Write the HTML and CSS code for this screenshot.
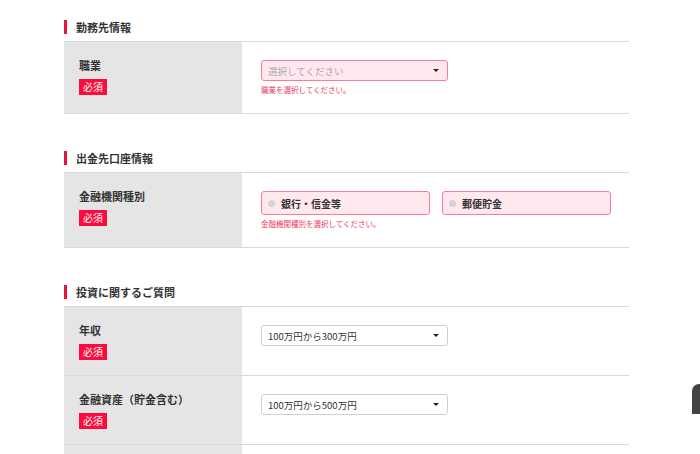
FILE: index.html
```html
<!DOCTYPE html>
<html lang="ja">
<head>
<meta charset="utf-8">
<link rel="stylesheet" href="styles.css">
</head>
<body>
<div class="page">
  <section class="section first">
    <h2 class="heading">勤務先情報</h2>
    <div class="table">
      <div class="row">
        <div class="label-cell"><div class="label">職業</div><span class="badge">必須</span></div>
        <div class="field-cell">
          <div class="select error placeholder"><span>選択してください</span><i class="arrow"></i></div>
          <div class="err-msg">職業を選択してください。</div>
        </div>
      </div>
    </div>
  </section>
  <section class="section">
    <h2 class="heading">出金先口座情報</h2>
    <div class="table">
      <div class="row">
        <div class="label-cell"><div class="label">金融機関種別</div><span class="badge">必須</span></div>
        <div class="field-cell">
          <div class="radios">
            <div class="radio"><i class="dot"></i><span>銀行・信金等</span></div>
            <div class="radio"><i class="dot"></i><span>郵便貯金</span></div>
          </div>
          <div class="err-msg">金融機関種別を選択してください。</div>
        </div>
      </div>
    </div>
  </section>
  <section class="section">
    <h2 class="heading">投資に関するご質問</h2>
    <div class="table">
      <div class="row">
        <div class="label-cell"><div class="label">年収</div><span class="badge">必須</span></div>
        <div class="field-cell">
          <div class="select"><span>100万円から300万円</span><i class="arrow"></i></div>
        </div>
      </div>
      <div class="row">
        <div class="label-cell"><div class="label">金融資産（貯金含む）</div><span class="badge">必須</span></div>
        <div class="field-cell">
          <div class="select"><span>100万円から500万円</span><i class="arrow"></i></div>
        </div>
      </div>
      <div class="row">
        <div class="label-cell"><div class="label">&nbsp;</div></div>
        <div class="field-cell"></div>
      </div>
    </div>
  </section>
</div>
<div class="side-tab"></div>
</body>
</html>
```
FILE: styles.css
```css
html, body {
  margin: 0;
  padding: 0;
  background: #fff;
  overflow: hidden;
}
body {
  font-family: "Noto Sans CJK JP", "Noto Sans", sans-serif;
  color: #333;
  width: 700px;
  height: 454px;
}
.page {
  margin-left: 64px;
  width: 565px;
}
.section {
  margin-top: 37px;
}
.section.first {
  margin-top: 20px;
}
.heading {
  margin: 0 0 7px;
  height: 14px;
  border-left: 3px solid #e8143c;
  padding-left: 9px;
  font-size: 11px;
  line-height: 14px;
  font-weight: 700;
  color: #333;
}
.table {
  border-top: 1px solid #d9d9d9;
}
.row {
  display: flex;
  border-bottom: 1px solid #d9d9d9;
}
.label-cell {
  width: 178px;
  flex: none;
  background: #e5e5e5;
  padding: 15px 15px 15px;
  box-sizing: border-box;
}
.label {
  font-size: 11px;
  line-height: 16px;
  font-weight: 700;
  color: #333;
}
.badge {
  display: block;
  width: fit-content;
  margin-top: 6px;
  background: #ff0a3c;
  color: #fff;
  font-size: 10px;
  line-height: 16px;
  height: 16px;
  padding: 0 4px;
}
.field-cell {
  flex: 1;
  padding: 18px 18px 18px 19px;
}
.select {
  width: 187px;
  height: 21px;
  box-sizing: border-box;
  border: 1px solid #cfcfcf;
  border-radius: 3px;
  background: #fff;
  display: flex;
  align-items: center;
  justify-content: space-between;
  padding: 0 8px 0 6px;
  font-size: 9.5px;
  color: #333;
}
.select.error {
  background: #ffe8ee;
  border-color: #ff7b95;
}
.select.placeholder span {
  color: #aaa;
  font-size: 9.5px;
}
.arrow {
  width: 0;
  height: 0;
  border-left: 3.5px solid transparent;
  border-right: 3.5px solid transparent;
  border-top: 3.5px solid #222;
}
.err-msg {
  margin-top: 3px;
  font-size: 7.5px;
  line-height: 11px;
  color: #f03a62;
}
.radios {
  display: flex;
  gap: 12px;
}
.radio {
  width: 169px;
  height: 24px;
  box-sizing: border-box;
  border: 1px solid #ff7b95;
  border-radius: 3px;
  background: #ffe8ee;
  display: flex;
  align-items: center;
  padding-left: 6px;
  font-size: 10px;
  font-weight: 700;
  color: #333;
}
.dot {
  width: 7px;
  height: 7px;
  border-radius: 50%;
  background: #d4d4d4;
  margin-right: 6px;
}
.side-tab {
  position: fixed;
  right: 0;
  top: 384px;
  width: 8px;
  height: 30px;
  background: #444;
  border-top-left-radius: 7px;
}
```
